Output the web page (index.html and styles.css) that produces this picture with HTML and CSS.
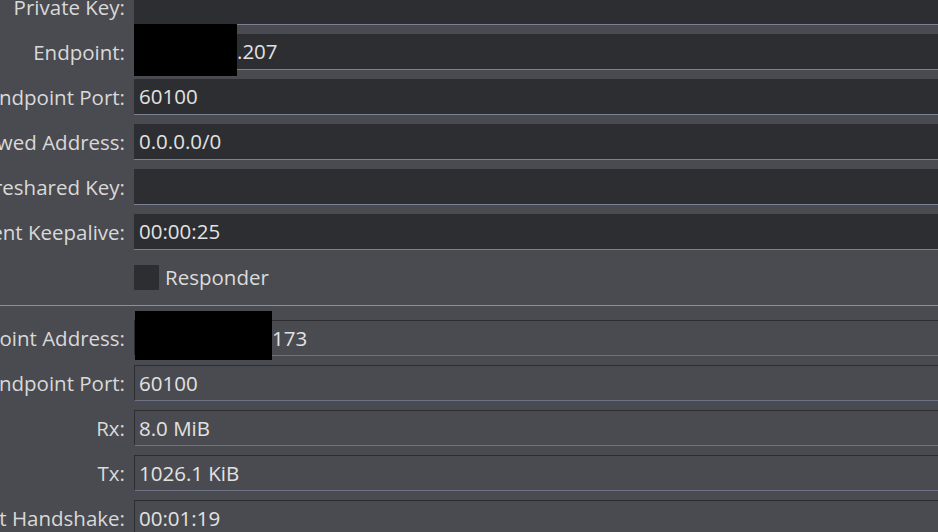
FILE: index.html
```html
<!DOCTYPE html>
<html>
<head>
<meta charset="utf-8">
<link rel="stylesheet" href="styles.css">
</head>
<body>
<div class="panel">
  <div class="form form-edit">
    <div class="label"><span>Private Key:</span></div>
    <div class="field"></div>

    <div class="label"><span>Endpoint:</span></div>
    <div class="field"><span class="mask mask-endpoint"></span>.207</div>

    <div class="label"><span>Endpoint Port:</span></div>
    <div class="field">60100</div>

    <div class="label"><span>Allowed Address:</span></div>
    <div class="field">0.0.0.0/0</div>

    <div class="label"><span>Preshared Key:</span></div>
    <div class="field"></div>

    <div class="label"><span>Persistent Keepalive:</span></div>
    <div class="field">00:00:25</div>

    <div class="label"></div>
    <div class="check-row">
      <span class="checkbox"></span>
      <span class="check-text">Responder</span>
    </div>
  </div>

  <div class="separator"></div>

  <div class="form form-info">
    <div class="label"><span>Current Endpoint Address:</span></div>
    <div class="ro"><span class="mask mask-address"></span>173</div>

    <div class="label"><span>Current Endpoint Port:</span></div>
    <div class="ro">60100</div>

    <div class="label"><span>Rx:</span></div>
    <div class="ro">8.0 MiB</div>

    <div class="label"><span>Tx:</span></div>
    <div class="ro">1026.1 KiB</div>

    <div class="label"><span>Last Handshake:</span></div>
    <div class="ro">00:01:19</div>
  </div>
</div>
</body>
</html>
```

FILE: styles.css
```css
html, body {
  margin: 0;
  padding: 0;
  background: #4a4b50;
  overflow: hidden;
  width: 938px;
  height: 532px;
}

body {
  font-family: "Open Sans", "Noto Sans", sans-serif;
  font-size: 20.5px;
  color: #dcdcdc;
}

.panel {
  width: 1000px;
  margin-top: -11px;
}

.form {
  display: grid;
  grid-template-columns: 125px 1fr;
  column-gap: 9px;
  row-gap: 9px;
}

.label {
  display: flex;
  justify-content: flex-end;
  align-items: center;
  white-space: nowrap;
  height: 36px;
  line-height: 35px;
  color: #d9d9d9;
}

.field {
  position: relative;
  box-sizing: border-box;
  height: 36px;
  line-height: 35px;
  background: #2d2e32;
  border-bottom: 1px solid #7b8192;
  padding-left: 5px;
  white-space: nowrap;
  color: #e2e2e2;
}

.ro {
  position: relative;
  box-sizing: border-box;
  height: 36px;
  line-height: 34px;
  border: 1px solid #2c2d31;
  border-bottom-color: #6c7284;
  border-right: none;
  padding-left: 4px;
  white-space: nowrap;
  color: #e2e2e2;
}

.mask {
  display: inline-block;
  vertical-align: top;
}

.mask::before {
  content: "";
  position: absolute;
  background: #000;
}

.mask-endpoint {
  width: 98px;
}

.mask-endpoint::before {
  left: 0;
  top: -10px;
  width: 103px;
  height: 52px;
}

.mask-address {
  width: 133px;
}

.mask-address::before {
  left: 0;
  top: -10px;
  width: 137px;
  height: 49px;
}

.check-row {
  display: flex;
  align-items: center;
  gap: 6px;
  height: 36px;
}

.checkbox {
  width: 25px;
  height: 25px;
  background: #2d2e32;
  margin-top: 1px;
}

.check-text {
  line-height: 25px;
  color: #dcdcdc;
}

.separator {
  height: 1px;
  background: #8d8f95;
  margin: 10px 0 14px;
}
```
